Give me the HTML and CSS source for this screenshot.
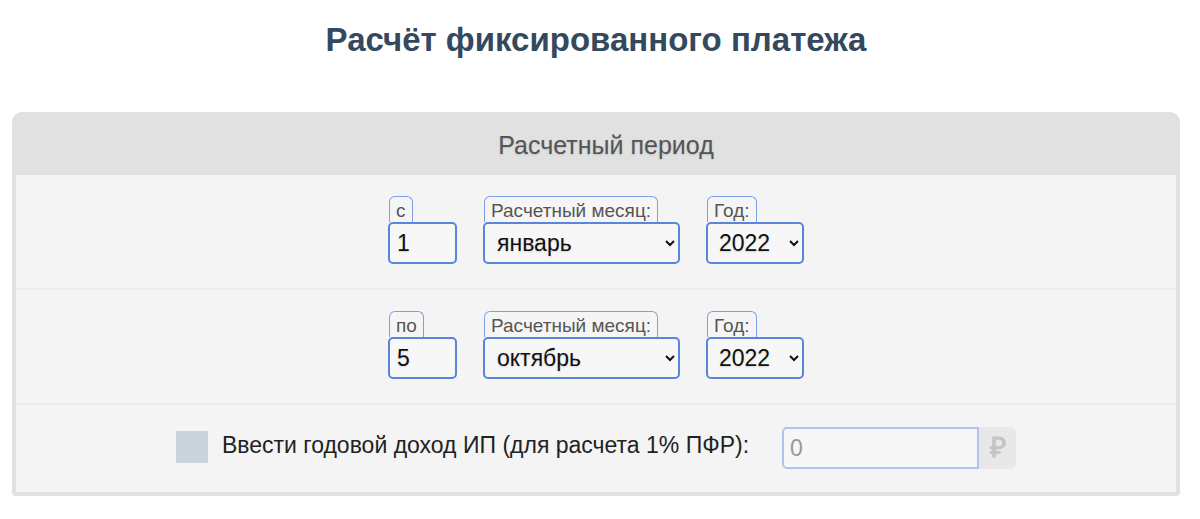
FILE: index.html
```html
<html>
<head>
  <link rel="stylesheet" href="styles.css">
</head>
<body>
  <h1 class="title">Расчёт фиксированного платежа</h1>
  <div class="panel">
    <div class="panel-head">Расчетный период</div>
    <div class="panel-row">
      <div class="field">
        <span class="tab">с</span>
        <input class="control day" type="text" value="1">
      </div>
      <div class="field">
        <span class="tab">Расчетный месяц:</span>
        <select class="control month">
          <option selected>январь</option>
          <option>февраль</option>
          <option>март</option>
        </select>
      </div>
      <div class="field">
        <span class="tab">Год:</span>
        <select class="control year">
          <option selected>2022</option>
          <option>2023</option>
        </select>
      </div>
    </div>
    <div class="panel-row">
      <div class="field">
        <span class="tab">по</span>
        <input class="control day" type="text" value="5">
      </div>
      <div class="field">
        <span class="tab">Расчетный месяц:</span>
        <select class="control month">
          <option selected>октябрь</option>
          <option>ноябрь</option>
          <option>декабрь</option>
        </select>
      </div>
      <div class="field">
        <span class="tab">Год:</span>
        <select class="control year">
          <option selected>2022</option>
          <option>2023</option>
        </select>
      </div>
    </div>
    <div class="panel-row income">
      <span class="check"></span>
      <span class="income-label">Ввести годовой доход ИП (для расчета 1% ПФР):</span>
      <div class="money">
        <input class="money-input" type="text" placeholder="0" disabled>
        <span class="money-sign">₽</span>
      </div>
    </div>
  </div>
</body>
</html>
```

FILE: styles.css
```css
body {
  margin: 0 20px 0 12px;
  font-family: "Liberation Sans", Arial, sans-serif;
  background-color: #fff;
}
.title {
  margin: 22px 0 54px;
  font-size: 33px;
  line-height: 36px;
  font-weight: bold;
  text-align: center;
  color: #34495e;
}
.panel {
  border: 4px solid #e1e1e1;
  border-radius: 10px 10px 4px 4px;
  background-color: #f4f4f4;
}
.panel-head {
  height: 59px;
  padding-left: 20px;
  line-height: 59px;
  text-align: center;
  font-size: 25px;
  color: #555;
  text-shadow: 0 1px 2px rgba(0, 0, 0, 0.15);
  background-color: #e1e1e1;
}
.panel-row {
  display: flex;
  justify-content: center;
  align-items: flex-end;
  gap: 26px;
  padding: 21px 0 24px;
}
.panel-row + .panel-row {
  border-top: 2px solid #ebebeb;
}
.field {
  display: flex;
  flex-direction: column;
  align-items: flex-start;
}
.tab {
  margin-left: 1px;
  height: 25px;
  padding: 0 6px;
  line-height: 27px;
  font-size: 19px;
  color: #555;
  border: 1px solid #7ea0e4;
  border-bottom: none;
  border-radius: 6px 6px 0 0;
  background-color: #f5f5f5;
}
.control {
  box-sizing: border-box;
  height: 42px;
  border: 2px solid #5b84dc;
  border-radius: 5px;
  background-color: #f7f7f7;
  font-family: "Liberation Sans", Arial, sans-serif;
  font-size: 23px;
  color: #111;
  text-shadow: 0 1px 2px rgba(0, 0, 0, 0.15);
}
.day {
  width: 69px;
  padding: 0 7px;
}
.month {
  width: 197px;
  padding-left: 8px;
}
.year {
  width: 98px;
  padding-left: 7px;
}
.income {
  align-items: center;
  gap: 0;
  padding: 22px 0 23px;
}
.check {
  width: 32px;
  height: 32px;
  margin-top: -3px;
  background-color: #cad2db;
}
.income-label {
  margin-left: 14px;
  padding-bottom: 5px;
  font-size: 23px;
  color: #222;
}
.money {
  display: flex;
  margin-left: 33px;
}
.money-input {
  box-sizing: border-box;
  width: 197px;
  height: 42px;
  padding: 0 6px;
  border: 2px solid #adc4ee;
  border-radius: 5px 0 0 5px;
  background-color: #f7f7f7;
  font-family: "Liberation Sans", Arial, sans-serif;
  font-size: 23px;
}
.money-input::placeholder {
  color: #999;
}
.money-sign {
  width: 37px;
  height: 42px;
  line-height: 42px;
  text-align: center;
  font-size: 28px;
  font-weight: bold;
  color: #c4c4c4;
  background-color: #e8e8e8;
  border-radius: 0 6px 6px 0;
}
```
